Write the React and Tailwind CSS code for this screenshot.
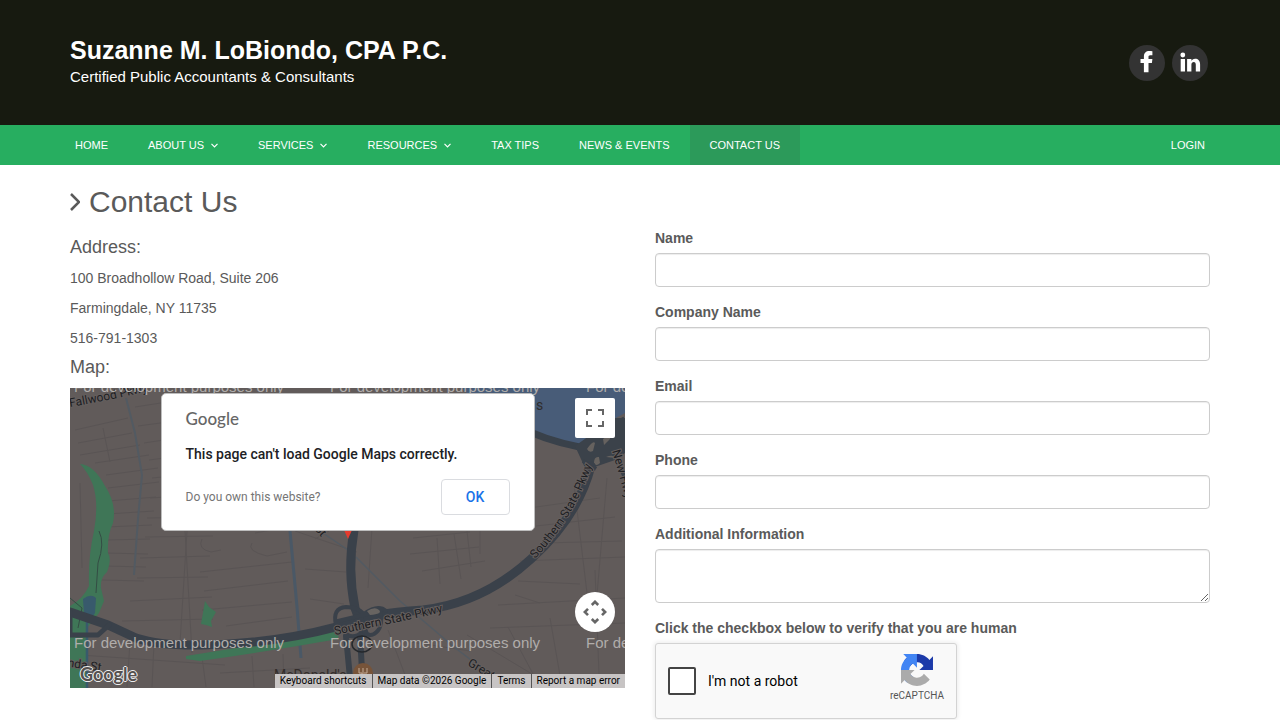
import React from 'react';

const navItems = [
  { label: 'Home' },
  { label: 'About Us', menu: true },
  { label: 'Services', menu: true },
  { label: 'Resources', menu: true },
  { label: 'Tax Tips' },
  { label: 'News & Events' },
  { label: 'Contact Us', active: true },
];

const fields = [
  { id: 'name', label: 'Name', type: 'text' },
  { id: 'company', label: 'Company Name', type: 'text' },
  { id: 'email', label: 'Email', type: 'email' },
  { id: 'phone', label: 'Phone', type: 'tel' },
];

const controlClass =
  'block w-full rounded border border-[#cccccc] bg-white px-3 text-sm text-[#555555] shadow-[inset_0_1px_1px_rgba(0,0,0,0.075)] focus:border-[#66afe9] focus:outline-none';

function Header() {
  return (
    <header className="bg-[#171a10]">
      <div className="mx-auto flex h-[125px] max-w-[1170px] items-center justify-between px-[15px]">
        <div className="text-white">
          <div className="text-[25px] leading-7 font-bold">Suzanne M. LoBiondo, CPA P.C.</div>
          <div className="text-[15px] leading-[26px]">Certified Public Accountants &amp; Consultants</div>
        </div>
        <div className="flex gap-[7px] pr-0.5">
          <a href="#facebook" aria-label="Facebook" className="flex size-9 items-center justify-center rounded-full bg-[#333333]">
            <svg viewBox="0 0 36 36" className="size-9" fill="#ffffff" aria-hidden="true">
              <path d="M23.400 6.200v4h-2.100c-1.500 0-1.800.8-1.800 1.800v2.100h3.900l-.5 4h-3.400v9.200h-4.600v-9.200h-3.400v-4h3.400v-2.700c0-3.500 2.200-5.400 5.300-5.400 1.500 0 2.800.1 3.200.2z" />
            </svg>
          </a>
          <a href="#linkedin" aria-label="LinkedIn" className="flex size-9 items-center justify-center rounded-full bg-[#333333]">
            <svg viewBox="0 0 36 36" className="size-9" fill="#ffffff" aria-hidden="true">
              <circle cx="10.800" cy="10" r="2.400" />
              <path d="M8.700 14h4.300v12.500H8.700zM15.100 14h4.300v1.800c.6-.9 1.700-2.100 3.800-2.100 2.800 0 4.900 1.800 4.900 5.700v7.100h-4.300v-6.700c0-1.700-.6-2.800-2.100-2.800-1.200 0-2.300.8-2.300 2.700v6.800h-4.300z" />
            </svg>
          </a>
        </div>
      </div>
    </header>
  );
}

function Nav() {
  return (
    <nav className="bg-[#27ae60] text-[11px] leading-10 text-white uppercase">
      <div className="mx-auto flex max-w-[1170px] justify-between">
        <ul className="flex">
          {navItems.map((item) => (
            <li key={item.label}>
              <a href="#nav" className={item.active ? 'flex items-center bg-[#2c9a5a] px-5' : 'flex items-center px-5'}>
                {item.label}
                {item.menu && (
                  <svg viewBox="0 0 7 5" className="ml-[7px] h-[5px] w-[7px]" fill="none" stroke="currentColor" strokeWidth="1.2" aria-hidden="true">
                    <path d="M.5.8l3 3 3-3" />
                  </svg>
                )}
              </a>
            </li>
          ))}
        </ul>
        <a href="#login" className="px-5">Login</a>
      </div>
    </nav>
  );
}

function MapDrawing() {
  return (
    <svg viewBox="0 0 555 300" preserveAspectRatio="xMidYMid slice" className="block h-full w-full font-[Roboto,sans-serif]" role="img" aria-label="Street map">
      <defs>
        <path id="fallwood" d="M0 19Q35 13 80 3" />
        <path id="parkwaySouth" d="M265 247Q320 236 378 223" />
        <path id="parkwayEast" d="M465 171Q507 127 525 68" />
        <path id="newHighway" d="M542 63L572 167" />
      </defs>
      <rect width="555" height="300" fill="#615b5a" />
      <g fill="none" stroke="#565152" strokeWidth="1" opacity=".65">
        <path d="M5 42L58 30M8 55L62 45M10 67L70 57M25 75L79 67M36 87L88 80M38 100L89 94M38 113L86 109M37 126L84 123M36 139L82 137M36 152L80 151M35 165L78 166M34 178L76 179M31 192L74 193" />
        <path d="M65 19L110 12M68 38L120 31M74 55L133 46M79 72L140 64M82 90L146 84M80 110L144 106M77 130L140 129M75 149L143 148M70 170L140 168M67 190L138 189M60 213L142 209M52 233L143 231" />
        <path d="M108 20L122 265M117 143L110 255M33 40L40 74M10 95L12 180" />
        <path d="M132 151Q127 161 141 164L151 162M182 155Q176 163 197 168L217 164M185 145L218 139M130 184L222 174M134 203L218 193M132 222L222 214M156 238L222 229" />
        <path d="M225 143L287 164M235 181L276 184M240 211L274 216M245 151L259 143M302 140L298 200M343 150L400 144M340 166L409 159M352 183L415 173M367 150L370 196M384 146L391 191M397 143L401 179M410 143L410 166" />
        <path d="M459 120L530 110M466 138L545 129M473 155L552 153M450 173L555 169M448 193L510 196M445 207L470 215M504 97L520 230M537 90L525 230M428 217L555 210M420 240L555 235M480 230L492 299M525 182L529 286" />
        <path d="M10 267L155 277M60 254L57 299M84 255L82 299M132 269L136 299M182 268L184 299M213 266L214 299M150 285L240 280M318 242L340 300M341 254L400 263M397 247L472 292M438 239L470 299" />
      </g>
      <g fill="none" stroke="#525a62">
        <path d="M56 10L65 45L72 87L68 131L64 187" strokeWidth="2" />
        <path d="M220 143L227 219L231 270" stroke="#4a5866" strokeWidth="3" />
        <path d="M286 169L330 213L384 259L405 275M250 143L278 162" strokeWidth="1.500" />
      </g>
      <g fill="#3f7657">
        <path d="M10 76Q24 77 35 98Q47 116 43 135Q37 148 38 165Q42 171 37 184Q30 190 31 200L34 213L29 225L17 240V300H0V218Q13 211 19 198Q18 169 24 143Q29 116 23 97Q18 84 10 76z" />
        <path d="M135 213L139 219L146 224L141 233L142 239L136 237L131 236z" />
        <path d="M116 268L228 250L270 238L268 251Q195 264 130 273L116 271z" />
      </g>
      <path d="M13 211Q21 205 26 210L25 225L20 232L14 226z" fill="#385a6c" />
      <path d="M17 230V300" stroke="#385a6c" strokeWidth="2.500" />
      <path d="M0 210L12 220L8 240M29 143Q35 155 28 175L26 205" fill="none" stroke="#344d44" strokeWidth="1" />
      <path d="M360 0H555V25L535 36L522 66L465 49L430 34L391 0z" fill="#485c78" />
      <path d="M460 44Q490 57 528 62L545 37L555 32" fill="none" stroke="#39414a" strokeWidth="7" />
      <path d="M505 58L526 43L540 30H555V65L545 72L516 82z" fill="#3b424a" />
      <path d="M517 61q6-9 8-6l-2 8q-4 2-6-2zM533 51q8-6 7 0l-6 6zM524 75q0-7 5-6l1 6q-4 4-6 0zM536 69q7-3 10 1z" fill="#66625f" />
      <path d="M526 81L513 73M546 68L555 90" fill="none" stroke="#39414a" strokeWidth="4" />
      <g fill="none" stroke="#3a414a" strokeLinecap="round" strokeLinejoin="round">
        <path d="M0 224L38 237L66 250Q91 258 132 257Q202 256 266 239Q300 225 353 222Q413 215 461 171Q508 129 521 78" strokeWidth="9" />
        <path d="M0 247H28L39 237M0 224V247" strokeWidth="5" />
        <path d="M284 142Q277 182 285 220L294 245" strokeWidth="9" />
        <path d="M266 237Q262 220 276 219Q288 219 294 226Q308 216 316 223M268 233L310 223Q314 240 304 246Q298 249 294 243M274 243Q279 251 288 247" strokeWidth="4" />
        <path d="M290 247L293 300M276 248L280 290" strokeWidth="6" />
      </g>
      <path d="M297 223q8-5 12-1t-9 5z" fill="#686461" />
      <ellipse cx="292" cy="256" rx="10" ry="8" fill="none" stroke="#25282c" strokeWidth="1.500" />
      <g fill="#1d2023" stroke="#655f5e" strokeWidth="2" paintOrder="stroke" fontSize="12">
        <text><textPath href="#fallwood">Fallwood Pkwy</textPath></text>
        <text><textPath href="#parkwaySouth">Southern State Pkwy</textPath></text>
        <text><textPath href="#parkwayEast">Southern State Pkwy</textPath></text>
        <text><textPath href="#newHighway">New Hwy</textPath></text>
        <text x="-3" y="279" transform="rotate(8 0 280)">nda St</text>
        <text x="397" y="277" transform="rotate(31 397 277)">Great</text>
        <text x="244" y="141" transform="rotate(48 244 141)">St</text>
      </g>
      <text x="204" y="292" fill="#332d2b" fontSize="14">McDonald's</text>
      <text x="466" y="22" fill="#302d2c" fontSize="14">s</text>
      <circle cx="293" cy="285" r="10" fill="#77543a" />
      <path d="M289 280v5h3v5M293 280v10M297 280v5h-3" fill="none" stroke="#c4aa94" />
      <path d="M274 142h8l-4 9z" fill="#e53b2e" />
      <g fill="#b0adab" fontFamily="Liberation Sans, sans-serif" fontSize="15">
        <text x="4" y="4">For development purposes only</text>
        <text x="260" y="4">For development purposes only</text>
        <text x="516" y="4">For development purposes only</text>
        <text x="4" y="260">For development purposes only</text>
        <text x="260" y="260">For development purposes only</text>
        <text x="516" y="260">For development purposes only</text>
      </g>
    </svg>
  );
}

function MapPanel() {
  return (
    <div className="relative h-[300px] overflow-hidden bg-[#615b5a] font-[Roboto,sans-serif]">
      <MapDrawing />
      <a href="#map" className="absolute bottom-0 left-[10px] font-[Lato,sans-serif] text-lg leading-7 font-bold text-[#55504e] [text-shadow:1px_0_#eee,-1px_0_#eee,0_1px_#eee,0_-1px_#eee]">Google</a>
      <div className="absolute right-0 bottom-0 flex h-[14px] items-center bg-[#c7c4c4] text-[10px] leading-[14px] text-black">
        <button type="button" className="px-[5px]">Keyboard shortcuts</button>
        <span className="border-l border-[#555555] px-[5px]">Map data ©2026 Google</span>
        <a href="#terms" className="border-l border-[#555555] px-[5px]">Terms</a>
        <a href="#report" className="border-l border-[#555555] px-[5px]">Report a map error</a>
      </div>
      <button type="button" aria-label="Toggle fullscreen view" className="absolute top-[10px] right-[10px] flex size-10 items-center justify-center rounded-xs bg-white">
        <svg viewBox="0 0 18 18" className="size-[18px]" fill="#666666" aria-hidden="true">
          <path d="M0 0v6h2V2h4V0H0zm16 0h-4v2h4v4h2V0h-2zm0 16h-4v2h6v-6h-2v4zM2 12H0v6h6v-2H2v-4z" />
        </svg>
      </button>
      <button type="button" aria-label="Map camera controls" className="absolute right-[10px] bottom-14 flex size-10 items-center justify-center rounded-full bg-white">
        <svg viewBox="0 0 24 24" className="size-6" fill="none" stroke="#666666" strokeWidth="2.600" aria-hidden="true">
          <path d="M8.800 5L12 1.800 15.200 5M8.800 19l3.200 3.200 3.200-3.200M5 8.800L1.800 12 5 15.200M19 8.800l3.200 3.200-3.200 3.200" />
        </svg>
      </button>
      <div role="dialog" aria-label="Map message" className="absolute inset-x-0 top-[5px] mx-auto flex h-[138px] w-[374px] flex-col rounded-[5px] border border-[#bdbdbd] bg-white px-6 pt-[15px]">
        <div className="font-[Lato,sans-serif] text-[17px] leading-5 font-medium text-[#666666]">Google</div>
        <p className="mt-[15px] text-sm leading-5 font-medium text-[#202124]">This page can't load Google Maps correctly.</p>
        <div className="mt-[15px] flex items-center justify-between">
          <a href="#owner" className="text-xs text-[#757575]">Do you own this website?</a>
          <button type="button" className="h-9 w-[69px] rounded border border-[#dadce0] text-sm font-medium text-[#1a73e8]">OK</button>
        </div>
      </div>
    </div>
  );
}

function Captcha() {
  return (
    <div className="flex h-[76px] w-[302px] justify-between rounded-[3px] border border-[#d3d3d3] bg-[#f9f9f9] px-3 font-[Roboto,sans-serif] shadow-[0_0_4px_1px_rgba(0,0,0,0.08)]">
      <label className="flex items-center gap-3 text-sm text-black">
        <input type="checkbox" className="size-7 appearance-none rounded-xs border-2 border-[#444444] bg-white checked:bg-[#27ae60]" />
        I'm not a robot
      </label>
      <div className="flex flex-col items-center pt-[10px]">
        <svg viewBox="0 0 64 64" className="size-8" aria-hidden="true">
          <path d="M64 31.955c-.001-.46-.012-.918-.032-1.373V4.639l-7.172 7.172C50.926 4.626 42.003.094 32.057.094c-10.420 0-19.667 4.977-25.500 12.684l11.756 11.879c1.152-2.131 2.789-3.961 4.755-5.338 2.045-1.596 4.942-2.900 8.989-2.900.489 0 .866.057 1.144.165 5.014.396 9.360 3.163 11.919 7.179l-8.321 8.321c10.540-.041 22.447-.066 27.201.129z" fill="#1c3aa9" />
          <path d="M31.862.094c-.46.001-.918.012-1.373.032H4.545l7.172 7.172C4.532 13.168 0 22.091 0 32.037c0 10.420 4.977 19.667 12.684 25.500l11.879-11.756c-2.131-1.152-3.961-2.789-5.338-4.755-1.596-2.045-2.900-4.942-2.900-8.989 0-.489.057-.866.165-1.144.396-5.014 3.163-9.360 7.179-11.919l8.321 8.321c-.041-10.540-.066-22.447-.128-27.201z" fill="#4285f4" />
          <path d="M.001 32.045c.001.46.012.918.032 1.373v25.944l7.172-7.172c5.870 7.185 14.793 11.717 24.739 11.717 10.420 0 19.667-4.977 25.500-12.684l-11.756-11.879c-1.152 2.131-2.789 3.961-4.755 5.338-2.045 1.596-4.942 2.900-8.989 2.900-.489 0-.866-.057-1.144-.165-5.014-.396-9.360-3.163-11.919-7.179l8.321-8.321c-10.540.041-22.447.066-27.201.128z" fill="#ababab" />
        </svg>
        <span className="pt-0.5 text-[10px] leading-4 text-[#555555]">reCAPTCHA</span>
      </div>
    </div>
  );
}

export default function App() {
  return (
    <div className="h-screen overflow-hidden bg-white font-[Liberation_Sans,Arial,sans-serif] text-sm text-[#5a5a5a]">
      <Header />
      <Nav />
      <main className="mx-auto max-w-[1170px] px-[15px]">
        <h1 className="flex items-center gap-[9px] pt-5 text-[30px] leading-[33px]">
          <svg viewBox="0 0 10 18" className="h-[18px] w-[10px]" fill="none" stroke="currentColor" strokeWidth="2.500" aria-hidden="true">
            <path d="M1 1l8 8-8 8" />
          </svg>
          Contact Us
        </h1>
        <div className="grid grid-cols-2 gap-[30px] pt-[10px]">
          <section>
            <h2 className="pt-[9px] text-lg leading-5">Address:</h2>
            <address className="pt-[11px] not-italic">
              <p className="mb-[10px] leading-5">100 Broadhollow Road, Suite 206</p>
              <p className="mb-[10px] leading-5">Farmingdale, NY 11735</p>
              <p className="mb-[9px] leading-5">516-791-1303</p>
            </address>
            <h2 className="mb-[11px] text-lg leading-5">Map:</h2>
            <MapPanel />
          </section>
          <form className="flex flex-col gap-[15px]">
            {fields.map((field) => (
              <div key={field.id}>
                <label htmlFor={field.id} className="mb-[5px] block leading-5 font-bold">{field.label}</label>
                <input id={field.id} type={field.type} className={`${controlClass} h-[34px]`} />
              </div>
            ))}
            <div>
              <label htmlFor="info" className="mb-[5px] block leading-5 font-bold">Additional Information</label>
              <textarea id="info" className={`${controlClass} h-[54px] resize-y py-1.5`} />
            </div>
            <fieldset>
              <legend className="mb-[5px] leading-5 font-bold">Click the checkbox below to verify that you are human</legend>
              <Captcha />
            </fieldset>
          </form>
        </div>
      </main>
    </div>
  );
}
